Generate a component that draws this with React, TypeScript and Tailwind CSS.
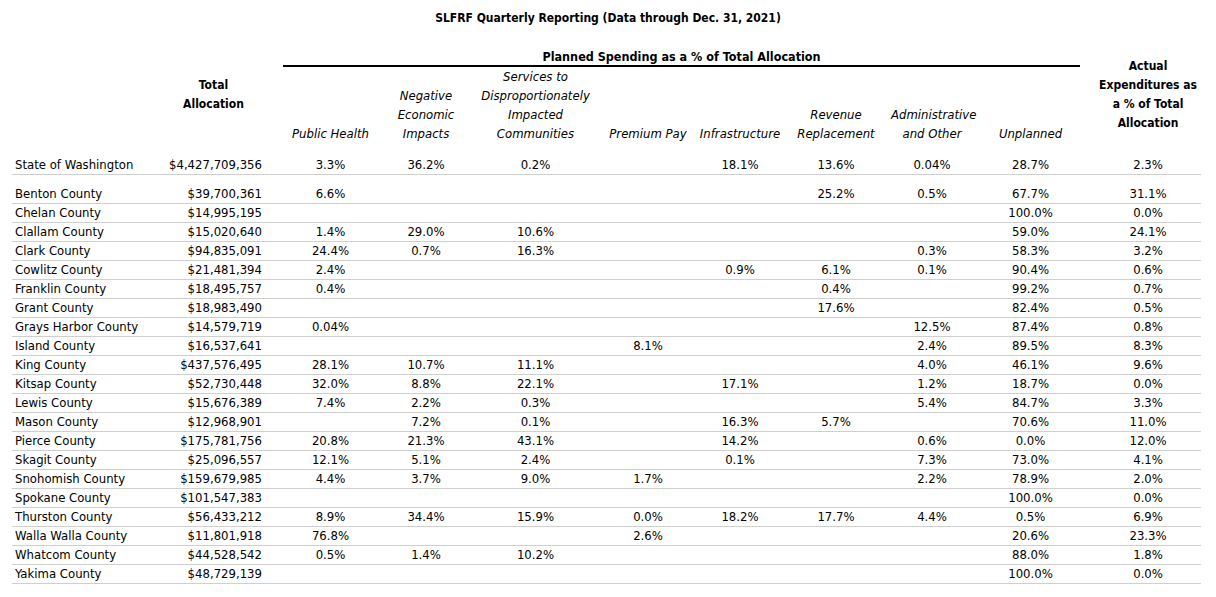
import React from 'react';

// columns: public health, negative, services, premium pay, infrastructure, revenue, admin, unplanned, actual
const state = ['State of Washington', '$4,427,709,356', '3.3%', '36.2%', '0.2%', '', '18.1%', '13.6%', '0.04%', '28.7%', '2.3%'];

const counties = [
  ['Benton County', '$39,700,361', '6.6%', '', '', '', '', '25.2%', '0.5%', '67.7%', '31.1%'],
  ['Chelan County', '$14,995,195', '', '', '', '', '', '', '', '100.0%', '0.0%'],
  ['Clallam County', '$15,020,640', '1.4%', '29.0%', '10.6%', '', '', '', '', '59.0%', '24.1%'],
  ['Clark County', '$94,835,091', '24.4%', '0.7%', '16.3%', '', '', '', '0.3%', '58.3%', '3.2%'],
  ['Cowlitz County', '$21,481,394', '2.4%', '', '', '', '0.9%', '6.1%', '0.1%', '90.4%', '0.6%'],
  ['Franklin County', '$18,495,757', '0.4%', '', '', '', '', '0.4%', '', '99.2%', '0.7%'],
  ['Grant County', '$18,983,490', '', '', '', '', '', '17.6%', '', '82.4%', '0.5%'],
  ['Grays Harbor County', '$14,579,719', '0.04%', '', '', '', '', '', '12.5%', '87.4%', '0.8%'],
  ['Island County', '$16,537,641', '', '', '', '8.1%', '', '', '2.4%', '89.5%', '8.3%'],
  ['King County', '$437,576,495', '28.1%', '10.7%', '11.1%', '', '', '', '4.0%', '46.1%', '9.6%'],
  ['Kitsap County', '$52,730,448', '32.0%', '8.8%', '22.1%', '', '17.1%', '', '1.2%', '18.7%', '0.0%'],
  ['Lewis County', '$15,676,389', '7.4%', '2.2%', '0.3%', '', '', '', '5.4%', '84.7%', '3.3%'],
  ['Mason County', '$12,968,901', '', '7.2%', '0.1%', '', '16.3%', '5.7%', '', '70.6%', '11.0%'],
  ['Pierce County', '$175,781,756', '20.8%', '21.3%', '43.1%', '', '14.2%', '', '0.6%', '0.0%', '12.0%'],
  ['Skagit County', '$25,096,557', '12.1%', '5.1%', '2.4%', '', '0.1%', '', '7.3%', '73.0%', '4.1%'],
  ['Snohomish County', '$159,679,985', '4.4%', '3.7%', '9.0%', '1.7%', '', '', '2.2%', '78.9%', '2.0%'],
  ['Spokane County', '$101,547,383', '', '', '', '', '', '', '', '100.0%', '0.0%'],
  ['Thurston County', '$56,433,212', '8.9%', '34.4%', '15.9%', '0.0%', '18.2%', '17.7%', '4.4%', '0.5%', '6.9%'],
  ['Walla Walla County', '$11,801,918', '76.8%', '', '', '2.6%', '', '', '', '20.6%', '23.3%'],
  ['Whatcom County', '$44,528,542', '0.5%', '1.4%', '10.2%', '', '', '', '', '88.0%', '1.8%'],
  ['Yakima County', '$48,729,139', '', '', '', '', '', '', '', '100.0%', '0.0%'],
];

const widths = ['w-[153px]', 'w-[103px]', 'w-[15px]', 'w-[95px]', 'w-[96px]', 'w-[123px]', 'w-[102px]', 'w-[82px]', 'w-[110px]', 'w-[82px]', 'w-[115px]', 'w-[113px]'];

function Row({ data, first }: { data: string[]; first?: boolean }) {
  const pad = first ? 'pt-[13px]' : '';
  return (
    <tr className="border-b border-[#cfcfcf]">
      <td className={`h-[18px] pl-[3px] text-left ${pad}`}>{data[0]}</td>
      <td className={`pr-[6px] text-right ${pad}`}>{data[1]}</td>
      <td className={pad}></td>
      {data.slice(2).map((v, i) => (
        <td key={i} className={`text-center ${i === 8 ? 'pl-[7px]' : ''} ${pad}`}>
          {v}
        </td>
      ))}
    </tr>
  );
}

export default function App() {
  return (
    <div className="min-h-[597px] w-[1216px] bg-white font-['DejaVu_Sans_Condensed','DejaVu_Sans',sans-serif] text-[13px] leading-[18px] text-black">
      <h1 className="pt-[10px] text-center text-[12px] font-bold leading-[16px]">
        SLFRF Quarterly Reporting (Data through Dec. 31, 2021)
      </h1>
      <table className="ml-[12px] mt-[22px] w-[1189px] table-fixed border-collapse">
        <colgroup>
          {widths.map((w, i) => (
            <col key={i} className={w} />
          ))}
        </colgroup>
        <thead>
          <tr>
            <th></th>
            <th rowSpan={2} className="pr-[6px] pb-[2px] align-middle text-[12px] font-bold leading-[19px]">
              Total
              <br />
              Allocation
            </th>
            <th></th>
            <th colSpan={8} className="p-0 align-bottom">
              <div className="mr-[8px] border-b-2 border-black text-center text-[12.5px] font-bold leading-[17px]">
                Planned Spending as a % of Total Allocation
              </div>
            </th>
            <th rowSpan={2} className="pl-[7px] pb-[2px] align-middle text-[12px] font-bold leading-[19px]">
              Actual
              <br />
              Expenditures as
              <br />a % of Total
              <br />
              Allocation
            </th>
          </tr>
          <tr className="text-center align-bottom font-normal italic leading-[19px]">
            <th></th>
            <th></th>
            <th className="font-normal">Public Health</th>
            <th className="font-normal">
              Negative
              <br />
              Economic
              <br />
              Impacts
            </th>
            <th className="font-normal">
              Services to
              <br />
              Disproportionately
              <br />
              Impacted
              <br />
              Communities
            </th>
            <th className="font-normal">Premium Pay</th>
            <th className="font-normal">Infrastructure</th>
            <th className="font-normal">
              Revenue
              <br />
              Replacement
            </th>
            <th className="font-normal">
              Administrative
              <br />
              and Other
            </th>
            <th className="font-normal">Unplanned</th>
          </tr>
        </thead>
        <tbody>
          <Row data={state} first />
          <tr>
            <td colSpan={12} className="h-[10px]"></td>
          </tr>
          {counties.map((c) => (
            <Row key={c[0]} data={c} />
          ))}
        </tbody>
      </table>
    </div>
  );
}
